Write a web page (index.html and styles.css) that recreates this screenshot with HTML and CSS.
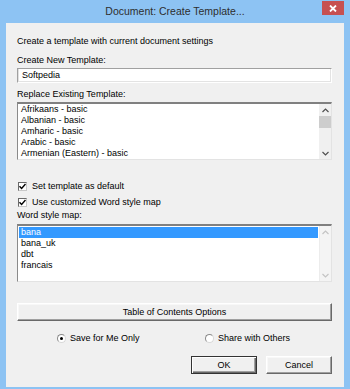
FILE: index.html
```html
<!DOCTYPE html>
<html lang="en">
<head>
    <meta charset="UTF-8">
    <meta name="viewport" content="width=device-width, initial-scale=1.0">
    <title>Document: Create Template...</title>
    <link rel="stylesheet" href="styles.css">
</head>
<body>
    <div class="window">
        <div class="titlebar">
            <span class="title">Document: Create Template...</span>
            <button class="close" aria-label="Close">
                <svg width="8" height="7" viewBox="0 0 8 7"><path d="M1 0.5 L7 6.5 M7 0.5 L1 6.5" stroke="#fff" stroke-width="1.8" fill="none"/></svg>
            </button>
        </div>

        <div class="panel">
            <p class="line">Create a template with current document settings</p>

            <div class="line label gap-new">Create New Template:</div>
            <div class="textbox">Softpedia</div>

            <div class="line label gap-replace">Replace Existing Template:</div>
            <div class="listbox">
                <ul class="items">
                    <li>Afrikaans - basic</li>
                    <li>Albanian - basic</li>
                    <li>Amharic - basic</li>
                    <li>Arabic - basic</li>
                    <li>Armenian (Eastern) - basic</li>
                </ul>
                <div class="scrollbar">
                    <div class="arrow">
                        <svg width="7" height="5" viewBox="0 0 7 5"><path d="M0.5 4 L3.5 1 L6.5 4" stroke="#505050" stroke-width="1.2" fill="none"/></svg>
                    </div>
                    <div class="track"><div class="thumb"></div></div>
                    <div class="arrow">
                        <svg width="7" height="5" viewBox="0 0 7 5"><path d="M0.5 1 L3.5 4 L6.5 1" stroke="#505050" stroke-width="1.2" fill="none"/></svg>
                    </div>
                </div>
            </div>

            <div class="checks">
                <label class="check">
                    <span class="box"><svg width="7" height="7" viewBox="0 0 7 7"><path d="M0.5 3.2 L2.6 5.4 L6.5 1" stroke="#000" stroke-width="1.4" fill="none"/></svg></span>
                    Set template as default
                </label>
                <label class="check">
                    <span class="box"><svg width="7" height="7" viewBox="0 0 7 7"><path d="M0.5 3.2 L2.6 5.4 L6.5 1" stroke="#000" stroke-width="1.4" fill="none"/></svg></span>
                    Use customized Word style map
                </label>
            </div>

            <div class="line label">Word style map:</div>
            <div class="listbox styles-list">
                <ul class="items">
                    <li class="selected">bana</li>
                    <li>bana_uk</li>
                    <li>dbt</li>
                    <li>francais</li>
                </ul>
                <div class="scrollbar disabled">
                    <div class="arrow">
                        <svg width="7" height="5" viewBox="0 0 7 5"><path d="M0.5 4 L3.5 1 L6.5 4" stroke="#c4c4c4" stroke-width="1.2" fill="none"/></svg>
                    </div>
                    <div class="track"></div>
                    <div class="arrow">
                        <svg width="7" height="5" viewBox="0 0 7 5"><path d="M0.5 1 L3.5 4 L6.5 1" stroke="#c4c4c4" stroke-width="1.2" fill="none"/></svg>
                    </div>
                </div>
            </div>

            <button class="btn wide">Table of Contents Options</button>

            <div class="radios">
                <label class="radio">
                    <span class="dot on"></span>
                    Save for Me Only
                </label>
                <label class="radio">
                    <span class="dot"></span>
                    Share with Others
                </label>
            </div>

            <div class="actions">
                <button class="btn default">OK</button>
                <button class="btn">Cancel</button>
            </div>
        </div>
    </div>
</body>
</html>
```

FILE: styles.css
```css
body {
    margin: 0;
    font-family: "Liberation Sans", Arial, sans-serif;
    font-size: 9px;
    color: #000;
}
.window {
    width: 350px;
    height: 389px;
    background-color: #8dc3f3;
    display: flex;
    flex-direction: column;
}
.titlebar {
    height: 23px;
    position: relative;
    display: flex;
    align-items: center;
    justify-content: center;
}
.title {
    font-size: 10.5px;
    color: #2e2e2e;
    margin-top: -2px;
}
.close {
    position: absolute;
    top: 1px;
    right: 6px;
    width: 22px;
    height: 14px;
    padding: 0;
    border: none;
    background-color: #c75050;
    display: flex;
    align-items: center;
    justify-content: center;
}
.panel {
    margin: 0 6px;
    height: 364px;
    background-color: #f0f0f0;
    padding: 13px 12px 0 11px;
    box-sizing: border-box;
}
.line {
    margin: 0;
    line-height: 11px;
    height: 11px;
    white-space: nowrap;
}
.gap-new {
    margin-top: 8px;
}
.gap-replace {
    margin-top: 6px;
}
.textbox {
    margin-top: 2px;
    height: 15px;
    box-sizing: border-box;
    line-height: 13px;
    padding-left: 4px;
    background-color: #fff;
    border-top: 1px solid #a0a0a0;
    border-left: 1px solid #a0a0a0;
    border-right: 1px solid #fff;
    border-bottom: 1px solid #fff;
    box-shadow: inset 1px 0 #e0e0e0, inset -1px -1px #e3e3e3;
}
.listbox {
    margin-top: 2px;
    height: 58px;
    box-sizing: border-box;
    display: flex;
    background-color: #fff;
    border-top: 2px solid #808080;
    border-left: 1px solid #8a8a8a;
    border-right: 1px solid #e3e3e3;
    border-bottom: 1px solid #e3e3e3;
}
.items {
    flex: 1;
    list-style: none;
    margin: 0;
    padding: 0 1px 0 1px;
    overflow: hidden;
}
.items li {
    height: 11px;
    line-height: 11px;
    padding-left: 2px;
    white-space: nowrap;
}
.styles-list {
    margin-top: 3px;
}
.styles-list .items {
    padding-top: 1px;
}
.items li.selected {
    background-color: #3399ff;
    color: #fff;
}
.scrollbar {
    width: 12px;
    display: flex;
    flex-direction: column;
    background-color: #f0f0f0;
}
.scrollbar.disabled {
    background-color: #f4f4f4;
    box-shadow: inset 1px 0 #ececec;
}
.arrow {
    height: 12px;
    display: flex;
    align-items: center;
    justify-content: center;
}
.track {
    flex: 1;
}
.thumb {
    height: 12px;
    background-color: #cdcdcd;
}
.checks {
    margin-top: 18px;
}
.check {
    height: 16px;
    display: flex;
    align-items: center;
    padding-left: 1px;
    white-space: nowrap;
}
.box {
    width: 9px;
    height: 9px;
    box-sizing: border-box;
    margin-right: 5px;
    background-color: #fff;
    border-top: 1px solid #696969;
    border-left: 1px solid #696969;
    border-right: 1px solid #c8c8c8;
    border-bottom: 1px solid #c8c8c8;
    display: flex;
    align-items: center;
    justify-content: center;
}
.btn {
    font-family: "Liberation Sans", Arial, sans-serif;
    font-size: 9px;
    color: #000;
    padding: 0;
    background-color: #f0f0f0;
    border-top: 1px solid #fff;
    border-left: 1px solid #fff;
    border-right: 1px solid #696969;
    border-bottom: 1px solid #696969;
    box-shadow: inset -1px -1px #a0a0a0, inset 1px 1px #f8f8f8;
}
.wide {
    display: block;
    width: 100%;
    height: 18px;
    margin-top: 21px;
}
.radios {
    margin-top: 10px;
    height: 14px;
    padding-left: 40px;
    display: grid;
    grid-template-columns: 148px 148px;
}
.radio {
    display: flex;
    align-items: center;
    white-space: nowrap;
}
.dot {
    width: 9px;
    height: 9px;
    box-sizing: border-box;
    margin-right: 4px;
    border-radius: 50%;
    background-color: #fff;
    border: 1px solid #8a8a8a;
    border-right-color: #d8d8d8;
    border-bottom-color: #d8d8d8;
    display: flex;
    align-items: center;
    justify-content: center;
}
.dot.on::after {
    content: "";
    width: 3px;
    height: 3px;
    border-radius: 50%;
    background-color: #000;
}
.actions {
    margin-top: 11px;
    display: flex;
    justify-content: flex-end;
    gap: 9px;
}
.actions .btn {
    width: 66px;
    height: 18px;
}
.btn.default {
    border: 1px solid #333;
    box-shadow: inset 1px 1px #fff, inset -1px -1px #696969, inset -2px -2px #a0a0a0;
}
```
